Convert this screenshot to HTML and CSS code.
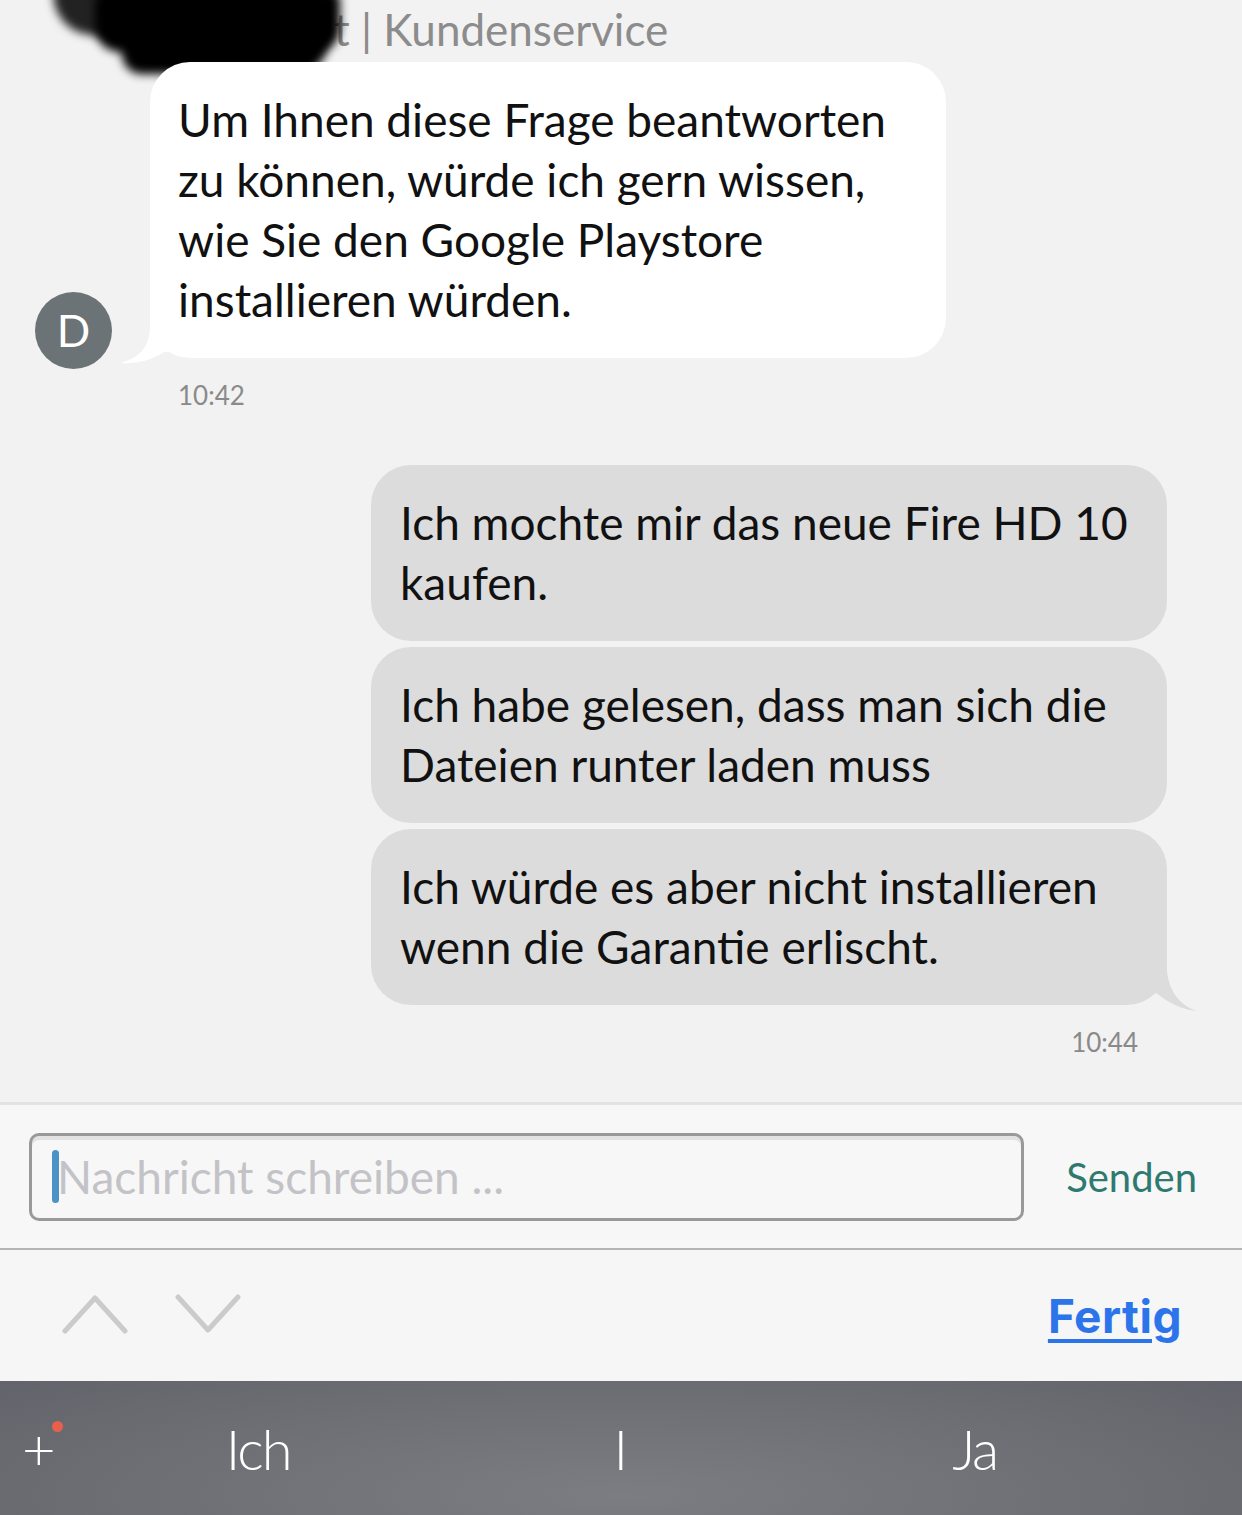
FILE: index.html
```html
<!DOCTYPE html>
<html lang="de">
<head>
    <meta charset="UTF-8">
    <meta name="viewport" content="width=device-width, initial-scale=1.0">
    <title>Kundenservice Chat</title>
    <link rel="stylesheet" href="styles.css">
</head>
<body>
    <div class="screen">
        <header class="chat-head">
            <span class="agent">t | Kundenservice</span>
            <span class="redact redact-smear"></span>
            <span class="redact redact-main"></span>
            <span class="redact redact-low"></span>
        </header>

        <main class="thread">
            <div class="msg msg-in">
                <div class="avatar">D</div>
                <div class="bubble bubble-in">
                    Um Ihnen diese Frage beantworten zu können, würde ich gern wissen, wie Sie den Google Playstore installieren würden.
                    <svg class="tail tail-in" width="60" height="50" viewBox="0 0 60 50">
                        <path d="M32 0 L32 12 C32 32 22 44 2 49 C18 50 32 47 46 38 L60 38 L60 0 Z" fill="#fff"/>
                    </svg>
                </div>
            </div>
            <div class="stamp stamp-in">10:42</div>

            <div class="msg-out">
                <div class="bubble bubble-out">Ich mochte mir das neue Fire HD 10 kaufen.</div>
                <div class="bubble bubble-out">Ich habe gelesen, dass man sich die Dateien runter laden muss</div>
                <div class="bubble bubble-out">
                    Ich würde es aber nicht installieren wenn die Garantie erlischt.
                    <svg class="tail tail-out" width="60" height="50" viewBox="0 0 60 50">
                        <path d="M28 0 L28 10 C30 30 40 44 58 50 C44 49 30 42 17 32 L0 32 L0 0 Z" fill="#dcdcdc"/>
                    </svg>
                </div>
            </div>
            <div class="stamp stamp-out">10:44</div>
        </main>

        <div class="composer">
            <div class="input-box">
                <span class="caret"></span>
                <span class="placeholder">Nachricht schreiben ...</span>
            </div>
            <span class="send">Senden</span>
        </div>

        <div class="kb-toolbar">
            <div class="arrows">
                <svg width="66" height="40" viewBox="0 0 66 40">
                    <path d="M3 37 L33 4 L63 37" fill="none" stroke="#cbcbcb" stroke-width="5" stroke-linecap="round" stroke-linejoin="round"/>
                </svg>
                <svg width="66" height="40" viewBox="0 0 66 40">
                    <path d="M3 3 L33 36 L63 3" fill="none" stroke="#cbcbcb" stroke-width="5" stroke-linecap="round" stroke-linejoin="round"/>
                </svg>
            </div>
            <span class="done">Fertig</span>
        </div>

        <div class="suggest">
            <span class="plus">+<i class="dot"></i></span>
            <span class="word word-1">Ich</span>
            <span class="word word-2">I</span>
            <span class="word word-3">Ja</span>
        </div>
    </div>
</body>
</html>
```

FILE: styles.css
```css
body {
    margin: 0;
    background-color: #f2f2f2;
    font-family: Lato, "Open Sans", sans-serif;
}
.screen {
    width: 1242px;
    height: 1515px;
    overflow: hidden;
    display: flex;
    flex-direction: column;
}

/* header */
.chat-head {
    position: relative;
    height: 62px;
    padding-left: 334px;
    font-size: 44px;
    line-height: 58px;
    color: #8c8c8c;
}
.redact {
    position: absolute;
    background-color: #000;
    filter: blur(5px);
}
.redact-smear {
    left: 52px;
    top: -12px;
    width: 150px;
    height: 50px;
    background-color: #222;
    border-radius: 10px 30px 20px 40px;
    transform: rotate(5deg);
}
.redact-main {
    left: 95px;
    top: -10px;
    width: 245px;
    height: 62px;
    border-radius: 14px 10px 24px 25px;
}
.redact-low {
    left: 122px;
    top: 20px;
    width: 205px;
    height: 54px;
    border-radius: 10px 10px 30px 20px;
}

/* messages */
.thread {
    flex: 1;
    display: flex;
    flex-direction: column;
}
.msg-in {
    display: flex;
    align-items: flex-end;
    gap: 38px;
    padding-left: 35px;
}
.avatar {
    width: 77px;
    height: 77px;
    border-radius: 50%;
    background-color: #6c7377;
    color: #fff;
    font-size: 44px;
    line-height: 77px;
    text-align: center;
    margin-bottom: -11px;
}
.bubble {
    position: relative;
    box-sizing: border-box;
    width: 796px;
    padding: 28px;
    border-radius: 40px;
    font-size: 46px;
    line-height: 60px;
    color: #111;
}
.bubble-in {
    background-color: #fff;
}
.msg-out {
    display: flex;
    flex-direction: column;
    align-items: flex-end;
    gap: 6px;
    margin-top: 55px;
    padding-right: 75px;
}
.bubble-out {
    background-color: #dcdcdc;
    padding-left: 29px;
}
.tail {
    position: absolute;
    bottom: -6px;
}
.tail-in {
    left: -32px;
}
.tail-out {
    right: -32px;
}
.stamp {
    margin-top: 22px;
    font-size: 26px;
    line-height: 30px;
    color: #8a8a8a;
}
.stamp-in {
    padding-left: 178px;
}
.stamp-out {
    align-self: flex-end;
    padding-right: 104px;
}

/* composer */
.composer {
    height: 148px;
    box-sizing: border-box;
    border-top: 3px solid #e3e3e3;
    border-bottom: 2px solid #b4b4b4;
    background-color: #f7f7f7;
    display: flex;
    align-items: center;
    padding: 0 45px 0 29px;
}
.input-box {
    box-sizing: border-box;
    width: 995px;
    height: 88px;
    border: 3px solid #999;
    border-radius: 10px;
    box-shadow: inset 0 4px 0 #e2e2e2;
    display: flex;
    align-items: center;
    padding-left: 20px;
}
.caret {
    width: 7px;
    height: 53px;
    border-radius: 4px;
    background-color: #4b92c6;
}
.placeholder {
    margin-left: -2px;
    font-size: 46px;
    color: #c3c3c7;
}
.send {
    margin-left: auto;
    font-size: 40px;
    color: #2f7a70;
}

/* keyboard toolbar */
.kb-toolbar {
    height: 131px;
    background-color: #f6f6f6;
    display: flex;
    align-items: center;
    padding: 0 60px 0 62px;
}
.arrows {
    display: flex;
    gap: 47px;
    margin-top: -4px;
}
.done {
    margin-left: auto;
    font-family: Inter, sans-serif;
    font-weight: 700;
    font-size: 46px;
    letter-spacing: 0.5px;
    color: #2c74ea;
    text-decoration: underline;
    text-decoration-thickness: 4px;
    text-underline-offset: 6px;
}

/* suggestions */
.suggest {
    height: 134px;
    position: relative;
    background: radial-gradient(ellipse 75% 140% at 50% 85%, #7c7d82 0%, #6d6e74 55%, #606168 100%);
    display: flex;
    align-items: center;
    color: #fff;
    font-weight: 300;
}
.plus {
    position: relative;
    margin-left: 22px;
    font-size: 58px;
    line-height: 1;
    font-weight: 300;
}
.dot {
    position: absolute;
    top: 2px;
    right: -7px;
    width: 11px;
    height: 11px;
    border-radius: 50%;
    background-color: #e8604a;
}
.word {
    font-size: 56px;
    letter-spacing: -2px;
}
.word-1 {
    margin-left: 170px;
}
.word-2 {
    margin-left: 323px;
}
.word-3 {
    margin-left: 326px;
}
```
